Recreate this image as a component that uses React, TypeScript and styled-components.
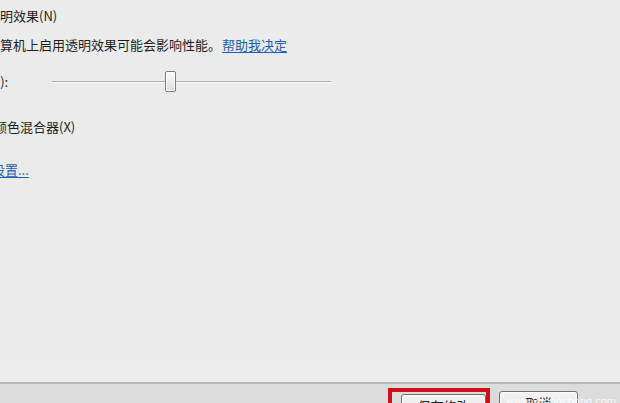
import React from 'react';
import styled, { createGlobalStyle } from 'styled-components';

const GlobalStyle = createGlobalStyle`
  html, body {
    margin: 0;
    padding: 0;
    background: #ebebeb;
    overflow: hidden;
  }
  body {
    font-family: "Noto Sans CJK SC", "Noto Sans", sans-serif;
    font-size: 13px;
    color: #1e1e1e;
  }
`;

const Page = styled.div`
  width: 620px;
  height: 403px;
  display: flex;
  flex-direction: column;
  overflow: hidden;
`;

const Content = styled.div`
  flex: 1;
  margin-left: -70px;
  padding-top: 8px;
  display: flex;
  flex-direction: column;
  background: linear-gradient(to bottom, #ebebeb 0, #ebebeb 92%, #eeeeee 100%);
`;

const Row = styled.div<{ $top: number; $indent: number }>`
  display: flex;
  align-items: center;
  margin-top: ${(p) => p.$top}px;
  padding-left: ${(p) => p.$indent}px;
  line-height: 16px;
  white-space: nowrap;
`;

const Link = styled.a`
  color: #1c5fb0;
  text-decoration: underline;
  text-underline-offset: 2px;
  cursor: pointer;
`;

const HelpLink = styled(Link)`
  margin-left: 1px;
`;

const SliderLabel = styled.span`
  width: 112px;
  flex-shrink: 0;
`;

const Track = styled.div`
  position: relative;
  width: 279px;
  height: 22px;
  &::before {
    content: '';
    position: absolute;
    left: 0;
    right: 0;
    top: 10px;
    height: 1px;
    background: #a9a9a9;
    border-bottom: 1px solid #f8f8f8;
  }
`;

const Thumb = styled.div`
  position: absolute;
  top: 0;
  width: 9px;
  height: 19px;
  border: 1px solid #7a7a7a;
  border-radius: 2px;
  background: linear-gradient(to bottom, #fbfbfb 0%, #ececec 50%, #dcdcdc 100%);
  box-shadow: inset 0 0 0 1px #ffffff;
`;

const Footer = styled.div`
  height: 19px;
  flex-shrink: 0;
  border-top: 2px solid #b9b9b9;
  background: #dcdcdc;
  display: flex;
  justify-content: flex-end;
  align-items: flex-start;
  padding-right: 42px;
  gap: 9px;
  overflow: hidden;
  position: relative;
`;

const Highlight = styled.div`
  margin-top: 4px;
  width: 85px;
  height: 30px;
  border: 4px solid #d20f18;
  padding: 2px 0 0 9px;
  box-sizing: content-box;
`;

const Button = styled.button<{ $width: number }>`
  width: ${(p) => p.$width}px;
  height: 23px;
  margin: 0;
  padding: 0;
  border: 1px solid #707070;
  border-radius: 3px;
  background: linear-gradient(to bottom, #f5f5f5 0%, #ebebeb 50%, #dddddd 51%, #cfcfcf 100%);
  box-shadow: inset 0 0 0 1px #fcfcfc;
  font-family: "Noto Sans CJK SC", sans-serif;
  font-size: 13px;
  color: #1e1e1e;
  line-height: 20px;
  text-align: center;
`;

const CancelButton = styled(Button)`
  margin-top: 7px;
`;

const Watermark = styled.span`
  position: absolute;
  right: 4px;
  top: 11px;
  color: rgba(255, 255, 255, 0.85);
  font-family: "Liberation Sans", sans-serif;
  font-size: 11px;
`;

const intensity = 0.42;

export default function App() {
  return (
    <>
      <GlobalStyle />
      <Page>
        <Content>
          <Row $top={0} $indent={31}>启用透明效果(N)</Row>
          <Row $top={13} $indent={31}>
            在此计算机上启用透明效果可能会影响性能。
            <HelpLink>帮助我决定</HelpLink>
          </Row>
          <Row $top={18} $indent={10}>
            <SliderLabel>颜色浓度(I):</SliderLabel>
            <Track>
              <Thumb style={{ left: `${Math.round(intensity * 268)}px` }} />
            </Track>
          </Row>
          <Row $top={26} $indent={64}>颜色混合器(X)</Row>
          <Row $top={27} $indent={10}>
            <Link>高级外观设置...</Link>
          </Row>
        </Content>
        <Footer>
          <Highlight>
            <Button $width={85}>保存修改</Button>
          </Highlight>
          <CancelButton $width={79}>取消</CancelButton>
          <Watermark>www.xitongcheng.com</Watermark>
        </Footer>
      </Page>
    </>
  );
}
